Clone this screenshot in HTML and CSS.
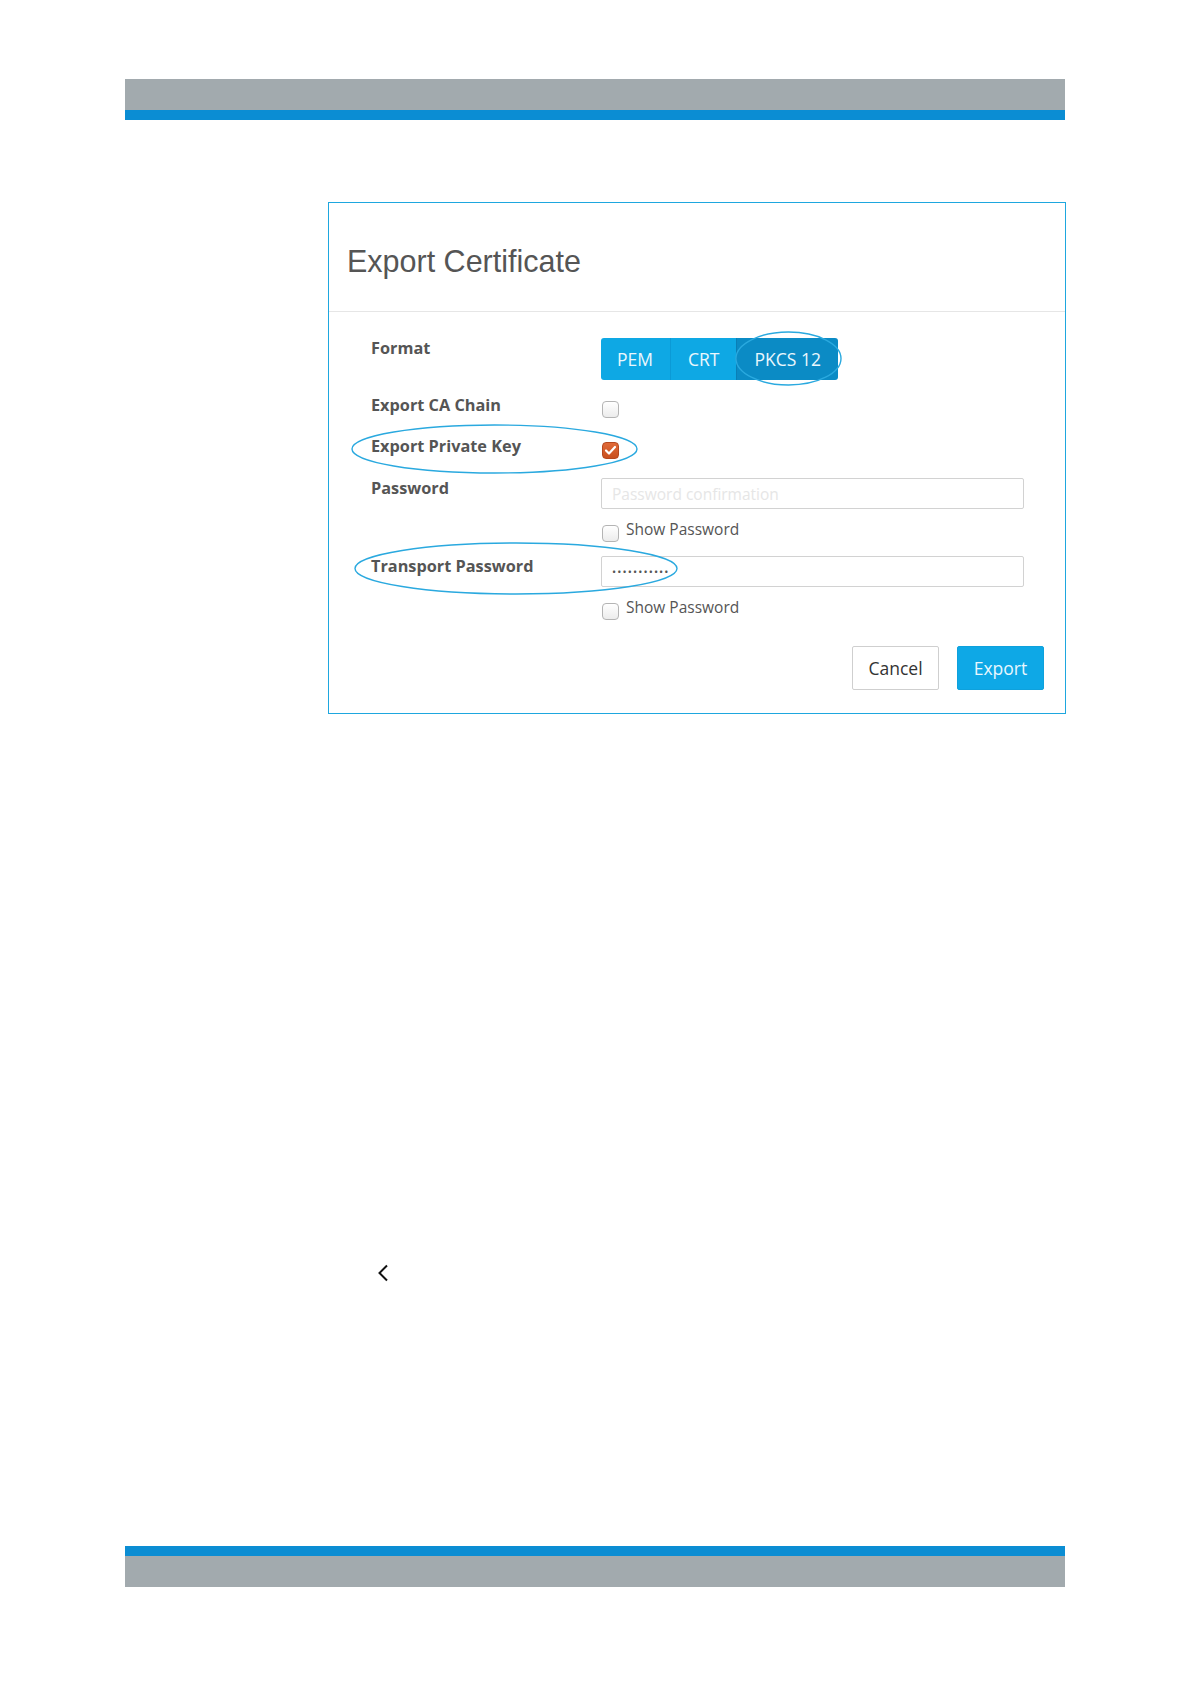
FILE: index.html
```html
<!DOCTYPE html>
<html lang="en">
<head>
    <meta charset="UTF-8">
    <meta name="viewport" content="width=device-width, initial-scale=1.0">
    <title>Export Certificate</title>
    <link rel="stylesheet" href="styles.css">
</head>
<body>

    <div class="page">
        <div class="topbar">
            <div class="bar-gray"></div>
            <div class="bar-blue"></div>
        </div>

        <div class="modal">
            <div class="modal-header">
                <h2>Export Certificate</h2>
            </div>

            <form class="modal-body">
                <div class="form-row row-format">
                    <label class="form-label">Format</label>
                    <div class="form-field">
                        <div class="btn-group">
                            <button type="button" class="seg">PEM</button>
                            <button type="button" class="seg">CRT</button>
                            <button type="button" class="seg active">PKCS 12</button>
                        </div>
                    </div>
                </div>

                <div class="form-row row-chain">
                    <label class="form-label">Export CA Chain</label>
                    <div class="form-field">
                        <span class="check"></span>
                    </div>
                </div>

                <div class="form-row row-key">
                    <label class="form-label">Export Private Key</label>
                    <div class="form-field">
                        <span class="check checked">
                            <svg width="13" height="11" viewBox="0 0 13 11"><path d="M2 5.5 L5 8.5 L11 2" fill="none" stroke="#fff" stroke-width="2.2" stroke-linecap="round" stroke-linejoin="round"/></svg>
                        </span>
                    </div>
                </div>

                <div class="form-row row-password">
                    <label class="form-label">Password</label>
                    <div class="form-field">
                        <input type="text" class="text-input" placeholder="Password confirmation">
                        <div class="show-pass"><span class="check"></span>Show Password</div>
                    </div>
                </div>

                <div class="form-row">
                    <label class="form-label">Transport Password</label>
                    <div class="form-field">
                        <input type="text" class="text-input dots" value="•••••••••••">
                        <div class="show-pass"><span class="check"></span>Show Password</div>
                    </div>
                </div>
            </form>

            <div class="modal-footer">
                <button type="button" class="btn btn-cancel">Cancel</button>
                <button type="button" class="btn btn-export">Export</button>
            </div>

            <!-- marcações por cima do diálogo -->
            <svg class="marks" width="736" height="509" viewBox="0 0 736 509">
                <ellipse cx="459.5" cy="155.5" rx="52.5" ry="26.5" />
                <ellipse cx="165.5" cy="246" rx="142.5" ry="24" />
                <ellipse cx="187" cy="365.5" rx="161" ry="25.5" />
            </svg>
        </div>

        <div class="pager">
            <svg width="12" height="18" viewBox="0 0 12 18"><path d="M10 1.5 L2.5 9 L10 16.5" fill="none" stroke="#111" stroke-width="2"/></svg>
        </div>

        <div class="bottombar">
            <div class="bar-blue"></div>
            <div class="bar-gray"></div>
        </div>
    </div>

</body>
</html>
```

FILE: styles.css
```css
/* Global */
body {
    margin: 0;
    padding: 0;
    background-color: #fff;
    font-family: 'Open Sans', 'Liberation Sans', sans-serif;
    color: #555;
}

.page {
    width: 940px;
    margin-left: 125px;
    padding-top: 79px;
}

/* Barras de topo e rodapé */
.bar-gray {
    height: 31px;
    background-color: #a2aaae;
}

.bar-blue {
    height: 10px;
    background-color: #0b8dd3;
}

.bottombar {
    margin-top: 264px;
}

/* Diálogo */
.modal {
    position: relative;
    width: 736px;
    margin-top: 82px;
    margin-left: 203px;
    border: 1px solid #1ea7df;
    background-color: #fff;
}

.modal-header {
    padding: 39px 18px 31px;
    border-bottom: 1px solid #e6e6e6;
}

.modal-header h2 {
    margin: 0;
    font-family: 'Liberation Sans', Arial, sans-serif;
    font-weight: normal;
    font-size: 30.5px;
    line-height: 38px;
    color: #555;
}

.modal-body {
    padding: 26px 41px 0 42px;
}

.form-row {
    display: flex;
    align-items: flex-start;
}

.form-label {
    width: 230px;
    flex-shrink: 0;
    font-weight: 700;
    font-size: 16.3px;
    line-height: 20px;
    color: #555;
}

.form-field {
    flex: 1;
}

.row-format {
    margin-bottom: 15px;
}

.row-chain {
    margin-bottom: 18px;
}

.row-key {
    margin-bottom: 19px;
}

.row-password {
    margin-bottom: 17px;
}

.row-chain .check,
.row-key .check {
    margin-top: 6px;
    margin-left: 1px;
}

/* Botões de formato */
.btn-group {
    display: inline-flex;
    height: 42px;
    border-radius: 3px;
    overflow: hidden;
}

.seg {
    border: none;
    margin: 0;
    padding: 0 17px;
    font-family: 'Open Sans', sans-serif;
    font-size: 17.5px;
    color: #eaf7fd;
    background-color: #0ea8e4;
    border-left: 1px solid #0b9ad6;
}

.seg:first-child {
    border-left: none;
    padding-left: 16px;
}

.seg.active {
    background-color: #0b8bc5;
    border-left-color: #0a7fb6;
    padding: 0 17px;
}

/* Checkbox */
.check {
    display: inline-flex;
    align-items: center;
    justify-content: center;
    width: 17px;
    height: 17px;
    box-sizing: border-box;
    border: 1px solid #b4b4b4;
    border-radius: 4px;
    background: linear-gradient(#fff, #ececec);
    vertical-align: top;
}

.check.checked {
    border-color: #b5481f;
    background: linear-gradient(#e06a38, #c9501f);
}

/* Campos de texto */
.text-input {
    display: block;
    width: 100%;
    height: 31px;
    box-sizing: border-box;
    border: 1px solid #d2d2d2;
    border-radius: 2px;
    padding: 0 10px;
    font-family: 'Open Sans', sans-serif;
    font-size: 15.5px;
    color: #555;
    outline: none;
}

.text-input::placeholder {
    color: #e6e6e6;
}

.text-input.dots {
    font-size: 11px;
    letter-spacing: 1.1px;
    color: #555;
}

.show-pass {
    display: flex;
    align-items: flex-start;
    height: 20px;
    margin-top: 10px;
    font-size: 15.5px;
    line-height: 20px;
    color: #555;
}

.show-pass .check {
    margin-top: 6px;
    margin-left: 1px;
    margin-right: 7px;
}

/* Rodapé do diálogo */
.modal-footer {
    display: flex;
    justify-content: flex-end;
    gap: 18px;
    padding: 29px 21px 23px;
}

.btn {
    width: 87px;
    height: 44px;
    border-radius: 2px;
    font-family: 'Open Sans', sans-serif;
    font-size: 17.5px;
    cursor: pointer;
}

.btn-cancel {
    background-color: #fff;
    border: 1px solid #cfcfcf;
    color: #333;
}

.btn-export {
    background-color: #0ea8e6;
    border: 1px solid #0ea1dc;
    color: #e8f7fe;
}

/* Elipses de destaque */
.marks {
    position: absolute;
    left: 0;
    top: 0;
    overflow: visible;
    pointer-events: none;
}

.marks ellipse {
    fill: none;
    stroke: #2aa9df;
    stroke-width: 1.4;
}

/* Seta de navegação */
.pager {
    margin-top: 550px;
    margin-left: 252px;
    height: 18px;
}

.pager svg {
    display: block;
}
```
